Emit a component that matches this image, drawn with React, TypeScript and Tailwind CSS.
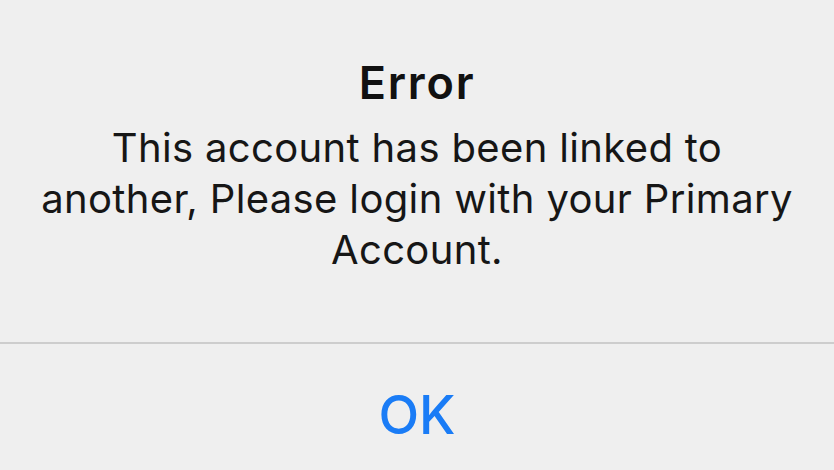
export default function App() {
  return (
    <div
      className="w-[834px] h-[470px] overflow-hidden bg-[#efefef] flex flex-col text-center"
      style={{ fontFamily: 'Inter, "Noto Sans", sans-serif' }}
    >
      <div className="pt-[60px] h-[342px]">
        <h1 className="text-[45px] leading-[45px] font-semibold text-[#111] tracking-[1.8px]">Error</h1>
        <p className="mt-[17px] text-[40px] leading-[51px] text-[#161616] tracking-[0.35px] whitespace-nowrap">
          This account has been linked to
          <br />
          another, Please login with your Primary
          <br />
          Account.
        </p>
      </div>
      <div className="h-[2px] bg-[#cdcdcd]" />
      <div className="pt-[45px] flex justify-center">
        <button className="text-[53px] leading-[53px] font-medium text-[#1a7cf6]">OK</button>
      </div>
    </div>
  );
}
